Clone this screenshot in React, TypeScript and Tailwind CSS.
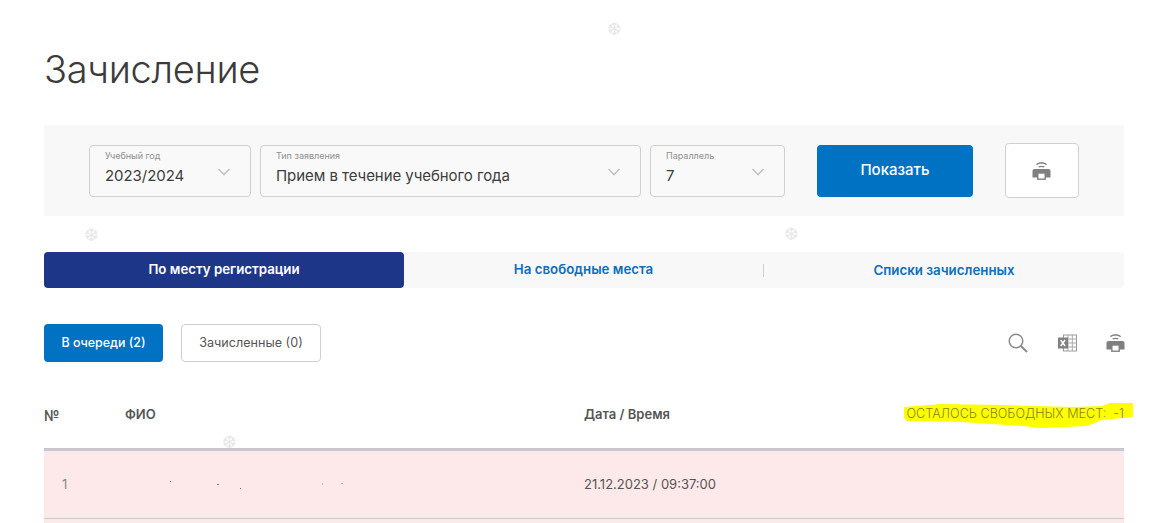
const font = { fontFamily: '"Inter", "Liberation Sans", sans-serif' };

function Chevron() {
  return (
    <svg width="14" height="8" viewBox="0 0 14 8" fill="none" stroke="#c4c4c4" strokeWidth="1.6">
      <path d="M1.5 1l5.5 5.5L12.5 1" />
    </svg>
  );
}

function Printer() {
  return (
    <svg width="20" height="20" viewBox="0 0 20 20" fill="#808080">
      <path d="M4 3.200C6.500.6 12.500.6 15 3.200l-1 1C12 2.400 7 2.400 5 4.200z" />
      <path d="M6.200 5.600c1.700-1.300 4.900-1.300 6.600 0l-1 1c-1.200-.7-3.400-.7-4.600 0z" />
      <path d="M2.500 8h14c1.200 0 2 .8 2 2v6.500h-18V10c0-1.200.8-2 2-2z" />
      <rect x="5.800" y="12" width="7.400" height="6.200" fill="#fff" stroke="#808080" strokeWidth="1.400" />
    </svg>
  );
}

function Excel() {
  return (
    <svg width="19" height="18" viewBox="0 0 19 18" fill="none">
      <rect x="5.500" y="1" width="13" height="16" fill="#fff" stroke="#9a9a9a" />
      <path d="M5.500 5h13M5.500 9h13M5.500 13h13M10 1v16M14.300 1v16" stroke="#a8a8a8" />
      <rect x="0" y="3.500" width="10" height="11" fill="#808080" />
      <path d="M2.700 6l4.400 6M7.100 6l-4.400 6" stroke="#fff" strokeWidth="1.500" />
    </svg>
  );
}

function Search() {
  return (
    <svg width="20" height="20" viewBox="0 0 20 20" fill="none" stroke="#8c8c8c">
      <circle cx="8" cy="8" r="6.800" strokeWidth="1.500" />
      <path d="M13 13l6 6" strokeWidth="2" />
    </svg>
  );
}

function Select({ label, value, className }: { label: string; value: string; className: string }) {
  return (
    <div className={`h-[52px] rounded border border-[#d0d0d0] bg-[#f9f9f9] flex justify-between ${className}`}>
      <div className="pl-[15px] pt-[4px]">
        <div className="text-[9px] leading-[12px] text-[#8f8f8f]">{label}</div>
        <div className="text-[15px] leading-[20px] mt-[4px] text-[#3d3d3d] tracking-[-0.05px]">{value}</div>
      </div>
      <div className="pr-[19px] pt-[22px]">
        <Chevron />
      </div>
    </div>
  );
}

function Flake({ className }: { className: string }) {
  return <span className={`absolute text-[#e8e8e8] text-[17px] leading-none ${className}`} style={{ fontFamily: '"DejaVu Sans", sans-serif' }}>❆</span>;
}

export default function App() {
  return (
    <div className="relative h-[523px] overflow-hidden bg-white pl-[44px] pr-[41px]" style={font}>
      <h1 className="pt-[47px] text-[38px] leading-[44px] font-light text-[#3b3b3b] tracking-[-0.3px]">Зачисление</h1>

      {/* filter */}
      <div className="mt-[34px] h-[91px] bg-[#f8f8f8] flex items-center pl-[45px]">
        <Select label="Учебный год" value="2023/2024" className="w-[162px]" />
        <Select label="Тип заявления" value="Прием в течение учебного года" className="w-[381px] ml-[9px]" />
        <Select label="Параллель" value="7" className="w-[135px] ml-[9px]" />
        <button className="ml-[32px] w-[156px] h-[52px] rounded bg-[#0072c4] text-white text-[15px] font-medium">Показать</button>
        <button className="ml-[32px] w-[74px] h-[55px] rounded border border-[#d0d0d0] bg-white flex items-center justify-center">
          <Printer />
        </button>
      </div>

      {/* tabs */}
      <div className="mt-[36px] h-[36px] bg-[#f8f8f8] rounded grid grid-cols-[360px_359px_361px] items-center text-[13.3px] font-semibold text-[#0c6fbd]">
        <div className="h-full rounded bg-[#1e3687] text-white flex items-center justify-center">По месту регистрации</div>
        <div className="text-center">На свободные места</div>
        <div className="text-center border-l border-[#d0d0d0] leading-[13px]">Списки зачисленных</div>
      </div>

      {/* queue switch + actions */}
      <div className="mt-[36px] h-[38px] flex items-center">
        <button className="w-[119px] h-[38px] rounded bg-[#0072c4] text-white text-[12.4px] font-medium">В очереди (2)</button>
        <button className="ml-[18px] w-[140px] h-[38px] rounded border border-[#cfcfcf] text-[#555] text-[12.6px]">Зачисленные (0)</button>
        <div className="ml-auto mr-[-2px] flex items-center gap-[30px]">
          <Search />
          <Excel />
          <div className="ml-[-1px]">
            <Printer />
          </div>
        </div>
      </div>

      {/* table head */}
      <div className="mt-[24px] h-[65px] flex items-center text-[13px] font-semibold text-[#555] border-b-[3px] border-[#c8c8cc] pb-[4px] relative">
        <div className="w-[81px] text-[14px]">№</div>
        <div className="w-[459px]">ФИО</div>
        <div>Дата / Время</div>
        <svg className="absolute left-[858px] top-[14px]" width="234" height="30" viewBox="0 0 234 30" fill="#ffff00">
          <path d="M2 7 L40 4 L100 5 L170 7 L200 6 L208 3 L231 3 L231 17 L200 20 L185 26 L140 28 L120 26 L60 22 L5 21 L2 18 Z" />
        </svg>
        <div className="absolute right-[0px] top-[19px] text-[12.6px] font-light text-[#85851c] whitespace-pre">ОСТАЛОСЬ СВОБОДНЫХ МЕСТ:  -1</div>
      </div>

      {/* row */}
      <div className="relative h-[68px] flex items-center bg-[#fde9e9] border-b border-[#cfc8c8] text-[13px] text-[#555]">
        <div className="w-[81px] pl-[18px] text-[#8a8a8a]">1</div>
        <div className="w-[459px]" />
        <div>21.12.2023 / 09:37:00</div>
        <span className="absolute left-[126px] top-[30px] w-px h-px bg-[#8a7a80]" />
        <span className="absolute left-[173px] top-[33px] w-[2px] h-px bg-[#8a7a80]" />
        <span className="absolute left-[196px] top-[37px] w-px h-px bg-[#a040c0]" />
        <span className="absolute left-[278px] top-[32px] w-px h-[2px] bg-[#b8b8c8]" />
        <span className="absolute left-[297px] top-[32px] w-[2px] h-px bg-[#c8a8b0]" />
      </div>
      <div className="h-[10px] bg-[#fde9e9]" />

      <Flake className="left-[607px] top-[21px]" />
      <Flake className="left-[84px] top-[227px]" />
      <Flake className="left-[784px] top-[226px]" />
      <Flake className="left-[222px] top-[434px]" />
    </div>
  );
}
